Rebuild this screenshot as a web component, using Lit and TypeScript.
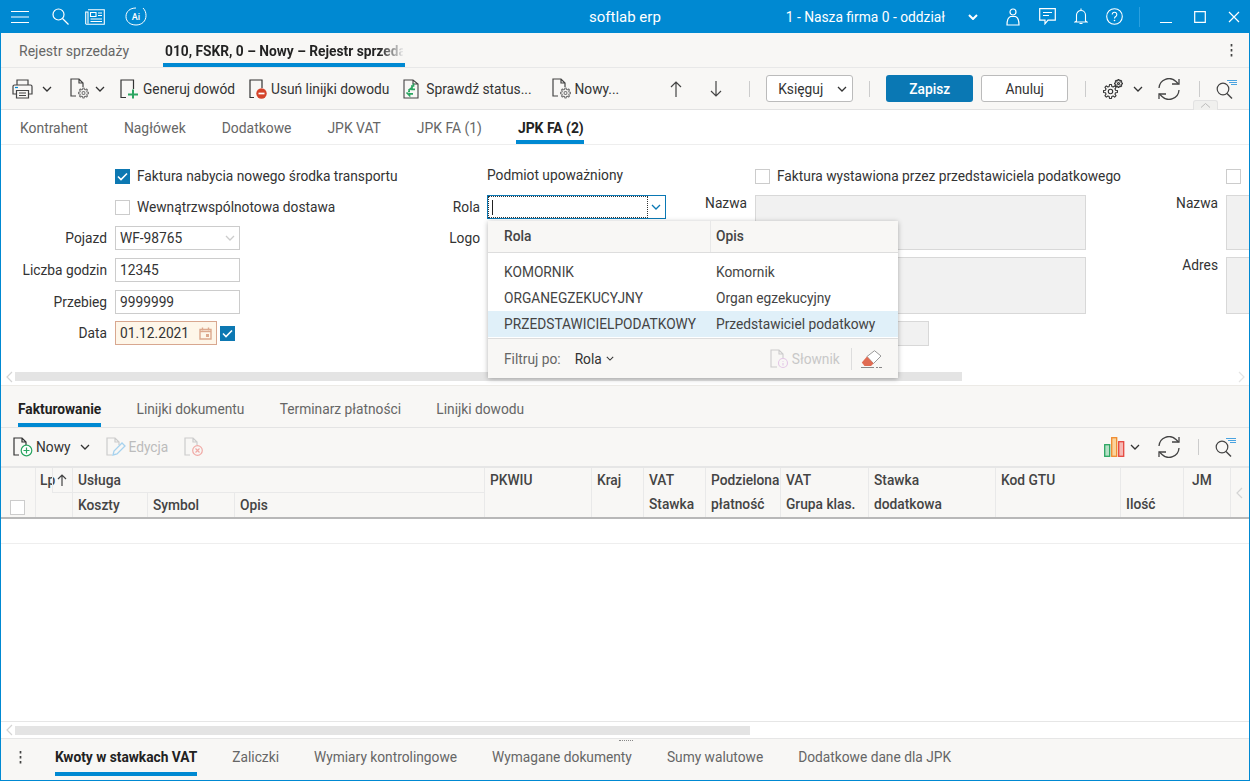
import { LitElement, html, css, svg } from "lit";
import { customElement } from "lit/decorators.js";

const chev = (c = "#333", w = 10, sw = 1.3) => html`<svg width=${w} height=${Math.round((w * 6) / 10)} viewBox="0 0 10 6"><path d="M1 1l4 4 4-4" fill="none" stroke=${c} stroke-width=${sw}/></svg>`;

function gearD(cx: number, cy: number, ro: number, ri: number, n: number) {
  const pts: string[] = [];
  for (let i = 0; i < n; i++) {
    const a = (i / n) * Math.PI * 2;
    const st = (Math.PI * 2) / n;
    const p = (r: number, t: number) => `${(cx + r * Math.cos(t)).toFixed(2)} ${(cy + r * Math.sin(t)).toFixed(2)}`;
    pts.push(p(ri, a - st * 0.32), p(ro, a - st * 0.18), p(ro, a + st * 0.18), p(ri, a + st * 0.32));
  }
  return "M" + pts.join("L") + "Z";
}
const gear = (cx: number, cy: number, ro: number, ri: number, hole: number, col: string, sw = 1.1) => svg`<path d=${gearD(cx, cy, ro, ri, 8)} fill="none" stroke=${col} stroke-width=${sw} stroke-linejoin="round"/><circle cx=${cx} cy=${cy} r=${hole} fill="none" stroke=${col} stroke-width=${sw}/>`;

const I = {
  menu: html`<svg width="18" height="14" viewBox="0 0 18 14"><path d="M0 1.500h18M0 7h18M0 12.500h18" stroke="#fff" stroke-width="1.200"/></svg>`,
  search: html`<svg width="17" height="17" viewBox="0 0 17 17"><circle cx="6.500" cy="6.500" r="5.500" fill="none" stroke="#fff" stroke-width="1.200"/><path d="M10.500 10.500l6 6" stroke="#fff" stroke-width="1.300"/></svg>`,
  news: html`<svg width="20" height="16" viewBox="0 0 20 16"><path d="M3 .7h16.300v14.600H1.500A1 1 0 0 1 .7 14V3H3v11.500M5.500 3.500h5.500v4H5.500zM13 4h4M13 6.500h4M5.500 10h11.500M5.500 12.500h11.500" fill="none" stroke="#fff" stroke-width="1.100"/></svg>`,
  ai: html`<svg width="22" height="19" viewBox="0 0 22 19"><path d="M11 1C5 1 1 4.500 1 9.500S5 18 11 18s10-4 10-9.500c0-3-1-5.500-3-7.500" fill="none" stroke="#fff" stroke-width="1"/><text x="11" y="13" text-anchor="middle" font-size="9" font-weight="500" font-family="Roboto" fill="#fff">Ai</text></svg>`,
  person: html`<svg width="14" height="18" viewBox="0 0 14 18"><circle cx="7" cy="4" r="3" fill="none" stroke="#fff" stroke-width="1.200"/><path d="M1 17c0-4 1-7.500 3.500-8.500h5C12 9.500 13 13 13 17z" fill="none" stroke="#fff" stroke-width="1.200"/></svg>`,
  chat: html`<svg width="17" height="17" viewBox="0 0 17 17"><path d="M.7.7h15.600v11.500H9l-3 3.600v-3.600H.7z" fill="none" stroke="#fff" stroke-width="1.200"/><path d="M4 4.500h9M4 7.500h6" stroke="#fff" stroke-width="1.100"/></svg>`,
  bell: html`<svg width="14" height="17" viewBox="0 0 14 17"><path d="M7 .5v2M2.500 13V7a4.500 4.500 0 0 1 9 0v6l1.500 1H1zM5.500 15.500h3" fill="none" stroke="#fff" stroke-width="1.100"/></svg>`,
  help: html`<svg width="17" height="17" viewBox="0 0 17 17"><circle cx="8.500" cy="8.500" r="7.800" fill="none" stroke="#fff" stroke-width="1.100"/><path d="M6.200 6.500a2.300 2.300 0 1 1 3.500 2c-.8.5-1.200 1-1.200 2" fill="none" stroke="#fff" stroke-width="1.100"/><circle cx="8.500" cy="12.500" r=".8" fill="#fff"/></svg>`,
  min: html`<svg width="12" height="12" viewBox="0 0 12 12"><path d="M0 11.500h12" stroke="#fff" stroke-width="1"/></svg>`,
  max: html`<svg width="12" height="12" viewBox="0 0 12 12"><path d="M.7.7h10.600v10.600H.7z" fill="none" stroke="#fff" stroke-width="1.200"/></svg>`,
  close: html`<svg width="12" height="12" viewBox="0 0 12 12"><path d="M1 1l10 10M11 1L1 11" stroke="#fff" stroke-width="1.200"/></svg>`,
  dots: html`<svg width="3" height="13" viewBox="0 0 3 13"><path d="M1.500 0v2.500M1.500 5v2.500M1.500 10v2.500" stroke="#444" stroke-width="1.700"/></svg>`,
  print: html`<svg width="21" height="20" viewBox="0 0 21 20"><path d="M5 6V1h11v5M4.500 15H1V7.500a1.500 1.500 0 0 1 1.500-1.500h16A1.500 1.500 0 0 1 20 7.500V15h-3.500M4.500 11.500h12V19h-12zM7 14h7M7 16.500h7" fill="none" stroke="#444" stroke-width="1.200"/><path d="M3 8.500h3" stroke="#0089d2" stroke-width="1.200"/></svg>`,
  docGear: html`<svg width="20" height="21" viewBox="0 0 20 21"><path d="M6 18H1V1h8l4 4v4M9 1v4h4" fill="none" stroke="#444" stroke-width="1.200"/>${gear(13.500, 15, 5, 3.700, 1.500, "#777")}</svg>`,
  genPlus: html`<svg width="19" height="20" viewBox="0 0 19 20"><path d="M6 18.500H1V1h12.500v9" fill="none" stroke="#333" stroke-width="1.200"/><path d="M8 15.500h10M13 10.500v9" stroke="#2aa561" stroke-width="2"/></svg>`,
  del: html`<svg width="18" height="20" viewBox="0 0 18 20"><path d="M5 18.500H1V1h12v8" fill="none" stroke="#333" stroke-width="1.200"/><circle cx="12.500" cy="14.500" r="5.200" fill="#d5432a"/><path d="M9.500 14.500h6" stroke="#fff" stroke-width="1.700"/></svg>`,
  check: html`<svg width="16" height="20" viewBox="0 0 16 20"><path d="M10 1H1v18h14V5zM10 1v4h5" fill="none" stroke="#444" stroke-width="1.100"/><path d="M5.500 11.500L9 8.500v1.800h3M8 7h2.500V4.500M3.500 13.500l3 3v-1.700h3.500M7 12.500H5" fill="none" stroke="#2aa561" stroke-width="1.700"/></svg>`,
  up: html`<svg width="12" height="16" viewBox="0 0 12 16"><path d="M6 16V1M1 6l5-5 5 5" fill="none" stroke="#444" stroke-width="1.200"/></svg>`,
  down: html`<svg width="12" height="16" viewBox="0 0 12 16"><path d="M6 0v15M1 10l5 5 5-5" fill="none" stroke="#444" stroke-width="1.200"/></svg>`,
  gears: html`<svg width="21" height="20" viewBox="0 0 21 20">${gear(7.500, 12.500, 7, 5.200, 2.200, "#333")}${gear(15.500, 4.500, 4, 2.900, 1, "#333")}</svg>`,
  refresh: html`<svg width="22" height="22" viewBox="0 0 22 22"><path d="M1 10a10 10 0 0 1 17-6.500l2.500 2.500M21 12a10 10 0 0 1-17 6.500L1.500 16" fill="none" stroke="#444" stroke-width="1.300"/><path d="M14 6h7V1M8 16H1v5" fill="none" stroke="#444" stroke-width="1.300"/></svg>`,
  filterSearch: html`<svg width="21" height="20" viewBox="0 0 21 20"><circle cx="7" cy="10" r="5.800" fill="none" stroke="#444" stroke-width="1.200"/><path d="M11 14.500l5 5" stroke="#444" stroke-width="1.400"/><path d="M11 1.500h10M13 3.500h8M15 5.500h6" stroke="#4aa3e0" stroke-width="1.100"/></svg>`,
  cal: html`<svg width="13" height="13" viewBox="0 0 13 13"><path d="M1 2.500h11v9.500H1zM3.500 .5v3M9.500 .5v3" fill="none" stroke="#dca98e" stroke-width="1.400"/><path d="M1 4.500h11" stroke="#dca98e" stroke-width="1.400"/><rect x="7" y="7" width="3" height="3" fill="#dca98e"/></svg>`,
  tick: html`<svg width="15" height="15" viewBox="0 0 15 15"><rect width="15" height="15" fill="#0d78b2"/><path d="M3 7.500l3 3 6-6" fill="none" stroke="#fff" stroke-width="1.600"/></svg>`,
  slownik: html`<svg width="19" height="20" viewBox="0 0 19 20"><path d="M7 18H1V1h8l4 4v4M9 1v4h4" fill="none" stroke="#ccc" stroke-width="1.100"/><circle cx="13" cy="14" r="4.500" fill="none" stroke="#e3c6e6" stroke-width="1.100"/><path d="M13 12v.8M13 14v2.500" stroke="#e3c6e6" stroke-width="1.100"/></svg>`,
  eraser: html`<svg width="21" height="18" viewBox="0 0 21 18"><path d="M6 6.500L13.500 .7l6.500 5.300-7.500 7.500z" fill="#fff" stroke="#999" stroke-width="1"/><path d="M6 6.500l6.500 7-2.500 2.500H3.500L.8 12.500z" fill="#e06b52"/><path d="M0 17.500h13M15 17.500h2M18 17.500h3" stroke="#888" stroke-width="1"/></svg>`,
  newDoc: html`<svg width="20" height="20" viewBox="0 0 20 20"><path d="M6 18H1V1h8l4 4v3M9 1v4h4" fill="none" stroke="#333" stroke-width="1.200"/><circle cx="13.500" cy="13.500" r="5.300" fill="#fff" stroke="#2aa561" stroke-width="1.200"/><path d="M10.500 13.500h6M13.500 10.500v6" stroke="#2aa561" stroke-width="1.200"/></svg>`,
  editDoc: html`<svg width="20" height="20" viewBox="0 0 20 20"><path d="M6 18H1V1h8l4 4v3M9 1v4h4" fill="none" stroke="#ccc" stroke-width="1.200"/><path d="M7 18l1-4 8-8 3 3-8 8z" fill="none" stroke="#a6d2ee" stroke-width="1.300"/></svg>`,
  delDoc: html`<svg width="20" height="20" viewBox="0 0 20 20"><path d="M6 18H1V1h8l4 4v3M9 1v4h4" fill="none" stroke="#ccc" stroke-width="1.200"/><circle cx="13.500" cy="13.500" r="4.800" fill="none" stroke="#f0aaa6" stroke-width="1.200"/><path d="M11.500 11.500l4 4M15.500 11.500l-4 4" stroke="#f0aaa6" stroke-width="1.200"/></svg>`,
  chart: html`<svg width="21" height="20" viewBox="0 0 21 20"><rect x=".7" y="7.700" width="5" height="11.600" fill="#b6e0c6" stroke="#2aa561" stroke-width="1.300"/><rect x="7.700" y=".7" width="5" height="18.600" fill="#fbd39a" stroke="#ef8a2d" stroke-width="1.300"/><rect x="14.700" y="4.700" width="5" height="14.600" fill="#f6b9b4" stroke="#e5473d" stroke-width="1.300"/></svg>`,
  sortUp: html`<svg width="10" height="12" viewBox="0 0 10 12"><path d="M5 12V1M1 5l4-4 4 4" fill="none" stroke="#444" stroke-width="1.200"/></svg>`,
  left: html`<svg width="7" height="12" viewBox="0 0 7 12"><path d="M6 1L1 6l5 5" fill="none" stroke="#d4d4d4" stroke-width="1.200"/></svg>`,
  right: html`<svg width="7" height="12" viewBox="0 0 7 12"><path d="M1 1l5 5-5 5" fill="none" stroke="#e4e4e4" stroke-width="1.200"/></svg>`,
};

@customElement("app-root")
export class AppRoot extends LitElement {
  static styles = css`
    :host { display: block; width: 1250px; height: 781px; overflow: hidden; position: relative; font: 13.75px/16px Roboto, sans-serif; color: #333; background: #fff; }
    * { box-sizing: border-box; }
    svg { display: block; flex: none; }
    .win { height: 781px; display: flex; flex-direction: column; border: 1px solid #0089d2; border-top: 0; }
    .ml3 { margin-left: 3px; } .ml4 { margin-left: 4px; } .ml5 { margin-left: 5px; } .ml7 { margin-left: 7px; } .ml8 { margin-left: 8px; } .ml9 { margin-left: 9px; }
    .ml14 { margin-left: 14px; } .ml15 { margin-left: 15px; } .ml16 { margin-left: 16px; } .ml17 { margin-left: 17px; } .ml18 { margin-left: 18px; } .ml19 { margin-left: 19px; }
    .ml20 { margin-left: 20px; } .ml27 { margin-left: 27px; } .ml28 { margin-left: 28px; } .ml51 { margin-left: 51px; } .mlauto { margin-left: auto; } .mr13 { margin-right: 13px; }

    .title { flex: none; height: 33px; margin: 0 -1px; background: #0089d2; color: #fff; display: flex; align-items: center; position: relative; }
    .title > * { flex: none; }
    .title .brand { position: absolute; left: 589px; top: 9px; font-size: 15px; }
    .tl { display: flex; align-items: center; padding-left: 11px; }
    .tl .s1 { margin-left: 23px; } .tl .s2 { margin-left: 16px; } .tl .s3 { margin-left: 20px; }
    .tr { margin-left: auto; display: flex; align-items: center; padding-right: 10px; }
    .firm { font-size: 13.8px; margin-right: 23px; }
    .tr .sep { width: 1px; height: 20px; background: #2aa0df; margin: 0 20px 0 16px; }
    .tr .w { margin-left: 22px; }

    .tabs1 { flex: none; height: 35px; background: #f8f7f5; border-bottom: 1px solid #e8e8e8; display: flex; padding-left: 18px; position: relative; }
    .tabs1 .t { padding: 10px 0 0; color: #666; font-size: 14px; }
    .tabs1 .a { margin-left: 34px; width: 242px; height: 34px; padding: 10px 2px 0; border-bottom: 4px solid #0089d2; font-weight: 700; white-space: nowrap; overflow: hidden; }
    .fade { display: inline-block; width: 238px; overflow: hidden; background: linear-gradient(90deg, #222 90%, #e8e8e8 100%); -webkit-background-clip: text; background-clip: text; -webkit-text-fill-color: transparent; }
    .tabs1 .more { margin-left: auto; margin-right: 16px; margin-top: 11px; }

    .tb { flex: none; display: flex; align-items: center; position: relative; }
    .tb1 { height: 42px; background: #f8f7f5; border-bottom: 1px solid #e2e2e2; padding-left: 11px; }
    .btn { display: flex; align-items: center; color: #333; white-space: nowrap; }
    .vsep { width: 1px; height: 16px; background: #ccc; flex: none; }
    .select { width: 87px; height: 27px; background: #fff; border: 1px solid #bbb; border-radius: 3px; display: flex; align-items: center; justify-content: space-between; padding: 0 5px 0 11px; }
    .primary { width: 87px; height: 27px; background: #0a78b4; color: #fff; border-radius: 3px; display: flex; align-items: center; justify-content: center; font-weight: 500; }
    .sec { width: 87px; height: 27px; background: #fff; border: 1px solid #bbb; border-radius: 3px; display: flex; align-items: center; justify-content: center; }
    .collapse { position: absolute; left: 1192px; top: 32px; width: 25px; height: 10px; background: #f0f0ee; border: 1px solid #e2e2e2; border-bottom: 0; border-radius: 3px 3px 0 0; display: flex; justify-content: center; padding-top: 2px; }

    .tabs2 { flex: none; height: 35px; background: #fff; border-bottom: 1px solid #eee; display: flex; gap: 36px; padding-left: 19px; font-size: 13.9px; }
    .tabs2 .t { padding-top: 10px; color: #666; }
    .tabs2 .a { color: #222; font-weight: 700; border-bottom: 4px solid #0089d2; height: 34px; margin-left: -2px; padding-left: 2px; }

    .form { flex: none; height: 240px; position: relative; overflow: hidden; display: flex; }
    .col { flex: none; display: flex; flex-direction: column; padding-top: 24px; }
    .c1 { width: 379px; } .c2 { width: 286px; } .c3 { width: 460px; } .c4 { width: 140px; }
    .r { display: flex; align-items: center; flex: none; white-space: nowrap; }
    .lab { flex: none; text-align: right; padding-right: 8px; color: #333; }
    .c1 .lab { width: 114px; } .c2 .lab { width: 107px; padding-right: 7px; } .c3 .lab { width: 89px; } .c4 .lab { width: 100px; }
    .cb { width: 15px; height: 15px; flex: none; border: 1px solid #ccc; background: #fff; }
    .r > .cb + span { margin-left: 7px; }
    .h15 > span:last-child { margin-bottom: 2px; }
    .inp { width: 125px; height: 24px; border: 1px solid #ccc; background: #fff; padding: 0 4px; display: flex; align-items: center; justify-content: space-between; }
    .h15 { height: 15px; } .m16 { margin-top: 16px; } .m11 { margin-top: 11px; } .m8 { margin-top: 8px; } .m7 { margin-top: 7px; }
    .date { width: 102px; background: #fef6e9; border-color: #d8a78f; }
    .date + svg { margin-left: 3px; }
    .rola { width: 179px; height: 24px; flex: none; border: 1px solid #0a78b4; background: #fff; position: relative; display: flex; justify-content: flex-end; align-items: center; padding-right: 4px; }
    .rola .caret { position: absolute; left: 4px; top: 4px; width: 1px; height: 15px; background: #222; }
    .rola .foc { position: absolute; left: 0; top: 0; bottom: 0; right: 17px; border: 1px dotted #333; }
    .tline { align-items: flex-start; }
    .ro { background: #f1f1f1; border: 1px solid #d8d8d8; width: 331px; flex: none; }
    .ro1 { height: 55px; } .ro2 { height: 57px; } .ro3 { height: 25px; width: 174px; }
    .c4 .ro { width: 40px; }
    .c4 .cbrow { padding-left: 100px; }
    .c3 .cbrow { padding-left: 89px; }
    .c2 .plain { padding-left: 107px; margin-top: -2px; margin-bottom: 2px; }
    .hs { position: absolute; left: 0; right: 0; top: 227px; height: 9px; display: flex; align-items: center; padding-left: 5px; }
    .hs .thumb { height: 9px; width: 947px; background: #e4e4e4; margin-left: 2px; }
    .hs .rr { margin-left: auto; margin-right: 4px; }

    .tabs3 { flex: none; height: 43px; background: #f8f7f5; border-top: 1px solid #eceae6; border-bottom: 1px solid #e4e4e4; display: flex; gap: 35.3px; padding-left: 17px; }
    .tabs3 .t { padding-top: 15px; color: #666; height: 41px; }
    .tabs3 .a { color: #222; font-weight: 700; border-bottom: 4px solid #0089d2; }
    .tb2 { height: 40px; background: #f8f7f5; padding-left: 12px; border-bottom: 2px solid #e6e6e6; }
    .dim { color: #bcbcbc; }

    .gh { flex: none; display: grid; height: 51px; grid-template-columns: 34px 37px 75px 87px 250px 107px 52px 62px 75px 88px 127px 125px 63px 47px 1fr; grid-template-rows: 25px 24px; background: #f8f7f5; border-bottom: 2px solid #b8b8b8; font-weight: 500; color: #444; }
    .gh > div { border-left: 1px solid #e9e9e9; padding: 4px 0 0 5px; white-space: nowrap; display: flex; }
    .gh .first { grid-row: 1 / span 2; border-left: 0; padding: 32px 0 0 9px; }
    .gh .lp { grid-row: 1 / span 2; padding-left: 4px; position: relative; }
    .gh .lpbox { position: absolute; left: 16px; top: 0; width: 20px; height: 25px; border: 1px solid #e9e9e9; border-top: 0; border-right: 0; padding: 6px 0 0 4px; }
    .gh .span3 { grid-column: 3 / span 3; border-bottom: 1px solid #e9e9e9; }
    .gh .s2 { grid-row: 1 / span 2; }
    .gh .stack { grid-row: 1 / span 2; display: flex; flex-direction: column; gap: 8px; }
    .gh .bottom { padding-top: 28px; }
    .gh .jm { padding-left: 8px; }
    .gh .arr { grid-row: 1 / span 2; padding: 19px 0 0 5px; }
    .gh .koszty { grid-column: 3; grid-row: 2; }
    .gh .symbol { grid-column: 4; grid-row: 2; }
    .gh .opis { grid-column: 5; grid-row: 2; }
    .row { flex: none; height: 25px; border-bottom: 1px solid #eee; }
    .main { flex: 1; }
    .hs2 { flex: none; height: 18px; border-top: 1px solid #e6e6e6; border-bottom: 1px solid #e6e6e6; display: flex; align-items: center; padding-left: 5px; position: relative; }
    .hs2 .thumb { height: 9px; width: 735px; margin-left: 2px; background: #e4e4e4; }
    .grip { position: absolute; left: 618px; bottom: -3px; width: 14px; border-top: 1px dotted #888; }
    .tabs4 { flex: none; height: 41px; background: #f8f7f5; display: flex; gap: 35px; padding-left: 18px; }
    .tabs4 .more { margin: 12px -2px 0 0; }
    .tabs4 .t { padding-top: 10px; color: #666; height: 37px; }
    .tabs4 .a { color: #222; font-weight: 700; border-bottom: 4px solid #0089d2; }

    .pop { position: absolute; left: 488px; top: 221px; width: 410px; height: 157px; background: #fff; box-shadow: 0 1px 5px rgba(0,0,0,.3); display: flex; flex-direction: column; }
    .ph { flex: none; height: 32px; display: grid; grid-template-columns: 222px 1fr; background: #f8f7f5; border-bottom: 1px solid #ddd; font-weight: 500; color: #444; }
    .ph div { padding: 7px 0 0 16px; height: 31px; }
    .ph div + div { border-left: 1px solid #e8e8e8; padding-left: 5px; }
    .pr { flex: none; display: grid; grid-template-columns: 212px 1fr; padding-left: 16px; height: 26px; align-items: center; color: #444; white-space: nowrap; }
    .pbody { flex: none; padding-top: 6px; height: 86px; border-bottom: 1px solid #ddd; }
    .hl { background: #e0f0f9; }
    .pf { flex: 1; background: #f8f7f5; display: flex; align-items: center; padding-left: 16px; }
    .pf .lbl { color: #666; margin-right: 14px; }
    .pf .rol { margin-right: 4px; }
    .pf .sl { margin-left: 156px; display: flex; align-items: center; color: #c8c8c8; gap: 3px; }
    .pf .bar { width: 1px; height: 22px; background: #ddd; margin: 0 9px 0 11px; }
  `;

  render() {
    return html`<div class="win">
      <div class="title">
        <div class="tl">${I.menu}<span class="s1">${I.search}</span><span class="s2">${I.news}</span><span class="s3">${I.ai}</span></div>
        <div class="brand">softlab erp</div>
        <div class="tr"><span class="firm">1 - Nasza firma 0 - oddział</span>${chev("#fff", 10, 2)}
          <span class="ml28">${I.person}</span><span class="ml19">${I.chat}</span><span class="ml18">${I.bell}</span><span class="ml18">${I.help}</span>
          <span class="sep"></span><span>${I.min}</span><span class="w">${I.max}</span><span class="w">${I.close}</span></div>
      </div>

      <div class="tabs1">
        <div class="t">Rejestr sprzedaży</div>
        <div class="a"><span class="fade">010, FSKR, 0 – Nowy – Rejestr sprzedaży</span></div>
        <div class="more">${I.dots}</div>
      </div>

      <div class="tb tb1">
        ${I.print}<span class="ml9">${chev()}</span>
        <span class="ml18">${I.docGear}</span><span class="ml5">${chev()}</span>
        <div class="btn ml15">${I.genPlus}<span class="ml4">Generuj dowód</span></div>
        <div class="btn ml14">${I.del}<span class="ml4">Usuń linijki dowodu</span></div>
        <div class="btn ml14">${I.check}<span class="ml7">Sprawdź status...</span></div>
        <div class="btn ml20">${I.docGear}<span class="ml3">Nowy...</span></div>
        <span class="ml51">${I.up}</span><span class="ml28">${I.down}</span>
        <span class="vsep ml27"></span>
        <div class="select ml16"><span>Księguj</span>${chev()}</div>
        <span class="vsep ml16"></span>
        <div class="primary ml16">Zapisz</div>
        <div class="sec ml8">Anuluj</div>
        <span class="vsep ml17"></span>
        <span class="ml17">${I.gears}</span><span class="ml9">${chev()}</span>
        <span class="ml15">${I.refresh}</span>
        <span class="vsep ml19"></span>
        <span class="ml16">${I.filterSearch}</span>
        <div class="collapse"><svg width="11" height="5" viewBox="0 0 11 5"><path d="M1 4.500l4.500-4 4.500 4" fill="none" stroke="#bbb" stroke-width="1"/></svg></div>
      </div>

      <div class="tabs2">
        <div class="t">Kontrahent</div><div class="t">Nagłówek</div><div class="t">Dodatkowe</div><div class="t">JPK VAT</div><div class="t">JPK FA (1)</div><div class="t a">JPK FA (2)</div>
      </div>

      <div class="form">
        <div class="col c1">
          <div class="r h15"><span class="lab"></span>${I.tick}<span class="ml7">Faktura nabycia nowego środka transportu</span></div>
          <div class="r h15 m16"><span class="lab"></span><div class="cb"></div><span>Wewnątrzwspólnotowa dostawa</span></div>
          <div class="r m11"><span class="lab">Pojazd</span><div class="inp"><span>WF-98765</span>${chev("#ccc")}</div></div>
          <div class="r m8"><span class="lab">Liczba godzin</span><div class="inp">12345</div></div>
          <div class="r m8"><span class="lab">Przebieg</span><div class="inp">9999999</div></div>
          <div class="r m7"><span class="lab">Data</span><div class="inp date"><span>01.12.2021</span>${I.cal}</div>${I.tick}</div>
        </div>
        <div class="col c2">
          <div class="r h15 plain">Podmiot upoważniony</div>
          <div class="r m11"><span class="lab">Rola</span><div class="rola"><span class="foc"></span><span class="caret"></span>${chev("#0a78b4")}</div></div>
          <div class="r m11"><span class="lab">Logo</span></div>
        </div>
        <div class="col c3">
          <div class="r h15 cbrow"><div class="cb"></div><span>Faktura wystawiona przez przedstawiciela podatkowego</span></div>
          <div class="r tline m11"><span class="lab">Nazwa</span><div class="ro ro1"></div></div>
          <div class="r tline m7"><span class="lab"></span><div class="ro ro2"></div></div>
          <div class="r tline m7"><span class="lab"></span><div class="ro ro3"></div></div>
        </div>
        <div class="col c4">
          <div class="r h15 cbrow"><div class="cb"></div></div>
          <div class="r tline m11"><span class="lab">Nazwa</span><div class="ro ro1"></div></div>
          <div class="r tline m7"><span class="lab">Adres</span><div class="ro ro2"></div></div>
        </div>
        <div class="hs">${I.left}<div class="thumb"></div><span class="rr">${I.right}</span></div>
      </div>

      <div class="tabs3">
        <div class="t a">Fakturowanie</div><div class="t">Linijki dokumentu</div><div class="t">Terminarz płatności</div><div class="t">Linijki dowodu</div>
      </div>

      <div class="tb tb2">
        <div class="btn">${I.newDoc}<span class="ml3">Nowy</span></div><span class="ml9">${chev()}</span>
        <div class="btn dim ml16">${I.editDoc}<span class="ml3">Edycja</span></div>
        <span class="ml16">${I.delDoc}</span>
        <span class="mlauto">${I.chart}</span><span class="ml5">${chev()}</span>
        <span class="ml18">${I.refresh}</span>
        <span class="vsep ml18"></span>
        <span class="ml16 mr13">${I.filterSearch}</span>
      </div>

      <div class="gh">
        <div class="first"><div class="cb"></div></div>
        <div class="lp">Lp<div class="lpbox">${I.sortUp}</div></div>
        <div class="span3">Usługa</div>
        <div class="s2">PKWIU</div>
        <div class="s2">Kraj</div>
        <div class="stack"><span>VAT</span><span>Stawka</span></div>
        <div class="stack"><span>Podzielona</span><span>płatność</span></div>
        <div class="stack"><span>VAT</span><span>Grupa klas.</span></div>
        <div class="stack"><span>Stawka</span><span>dodatkowa</span></div>
        <div class="s2">Kod GTU</div>
        <div class="s2 bottom">Ilość</div>
        <div class="s2 jm">JM</div>
        <div class="arr">${I.left}</div>
        <div class="koszty">Koszty</div>
        <div class="symbol">Symbol</div>
        <div class="opis">Opis</div>
      </div>
      <div class="row"></div>
      <div class="main"></div>
      <div class="hs2">${I.left}<div class="thumb"></div><span class="grip"></span></div>
      <div class="tabs4">
        <div class="more">${I.dots}</div>
        <div class="t a">Kwoty w stawkach VAT</div><div class="t">Zaliczki</div><div class="t">Wymiary kontrolingowe</div><div class="t">Wymagane dokumenty</div><div class="t">Sumy walutowe</div><div class="t">Dodatkowe dane dla JPK</div>
      </div>
    </div>

    <div class="pop">
      <div class="ph"><div>Rola</div><div>Opis</div></div>
      <div class="pbody">
        <div class="pr"><span>KOMORNIK</span><span>Komornik</span></div>
        <div class="pr"><span>ORGANEGZEKUCYJNY</span><span>Organ egzekucyjny</span></div>
        <div class="pr hl"><span>PRZEDSTAWICIELPODATKOWY</span><span>Przedstawiciel podatkowy</span></div>
      </div>
      <div class="pf"><span class="lbl">Filtruj po:</span><span class="rol">Rola</span>${chev("#333", 8)}
        <div class="sl">${I.slownik}<span>Słownik</span></div><span class="bar"></span>${I.eraser}</div>
    </div>`;
  }
}
